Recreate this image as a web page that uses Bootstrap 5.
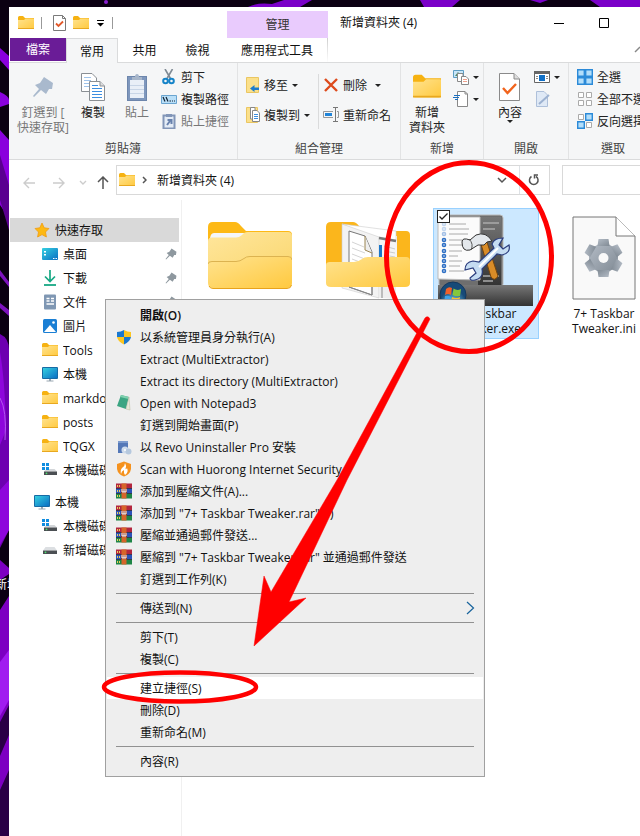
<!DOCTYPE html>
<html lang="zh-Hant">
<head>
<meta charset="utf-8">
<meta name="viewport" content="width=device-width, initial-scale=1">
<title>新增資料夾 (4)</title>
<link href="https://cdn.jsdelivr.net/npm/bootstrap@5.3.0/dist/css/bootstrap.min.css" rel="stylesheet">
<style>
body{font-family:"Open Sans","Noto Sans CJK TC",sans-serif;font-size:12px;line-height:15px;color:#111;background:#0b0012}
button,input{font:inherit;color:inherit}
button{background:none;border:0;padding:0}
a{color:inherit;text-decoration:none}
svg{display:block;flex-shrink:0}
.desk{min-height:100vh;padding:7px 0 0 9px}
.wallpaper{inset:0;width:100%;height:100%}
.desk-label{left:-5px;top:577px;color:#fff;white-space:nowrap}
.win{min-height:calc(100vh - 7px);background:#fff}
.head{height:55px}
.qat{height:31px;gap:7px;padding-left:9px}
.vline{width:1px;height:12px;background:#999}
.tabs{height:24px}
.tab-b{height:24px;width:53px}
.tab-file{width:57px;height:23px;background:#6a1c97;color:#fff;border-left:1px solid #fff}
.tab-on{width:52px;height:25px;background:#f5f6f7;border:1px solid #dadbdc;border-bottom:0;z-index:1}
.left-head{width:218px}
.ctx-head{width:101px;padding-top:4px}
.ctx-top{height:27px;background:#e9cbfd;color:#333}
.ctx-sub{height:24px;border-right:1px solid;border-image:linear-gradient(#ccc,#fff) 1}
.cap{width:45px;height:31px}
.ribbon{height:98px;background:#f5f6f7;border-top:1px solid #dadbdc;border-bottom:1px solid #dadbdc;color:#222}
.grp{padding:3px 0;border-right:1px solid #e2e3e4}
.grp-body{height:75px}
.grp-name{height:15px;color:#444}
.g1{width:229px}.g2{width:163px}.g3{width:83px}.g4{width:85px}.g5{width:100px}
.big{padding-top:3px}
.big .pic{height:36px}
.off{color:#777}
.small-b{height:22px;gap:4px}
.mid-b{height:30px;gap:4px}
.caret{width:0;height:0;border:3px solid transparent;border-top-color:#222;border-bottom:0}
.inner-line{width:1px;height:55px;background:#dadbdc}
.navrow{height:40px;padding-top:5px}
.arrows{padding:0 7px 0 14px}
.gap-fwd{margin:0 14px 0 18px}
.gap-up{margin-left:10px}
.bar{height:30px;border:1px solid #d9d9d9}
.place{margin-left:10px}
.search{width:78px;margin-left:12px;border-right:0;background:#fff;outline:0}
.crumb-ic{margin:0 7px 0 2px}
.side{width:173px;padding-top:18px;border-right:1px solid #f0f0f0}
.side a{height:24px;gap:5px;padding:0 2px 0 32px;margin-right:2px;margin-left:1px}
.side a.root{padding-left:24px}
.side a.sel{background:#d9d9d9}
.side span{overflow:hidden}
.files{padding:8px 0 0 15px;gap:12px}
.tile{width:106px;height:131px;border:1px solid transparent;padding-top:5px;line-height:15px}
.tile.sel{background:#cce8ff;border-color:#99d1ff}
.tile .pic{height:92px}
.page-pic{padding-top:2px}
.tick{left:3px;top:1px;width:13px;height:13px;appearance:none;border:1px solid #222;background:#fff url("data:image/svg+xml,%3Csvg xmlns='http://www.w3.org/2000/svg' viewBox='0 0 11 11'%3E%3Cpath d='M1.500 5.500 4 8 9.500 2.500' fill='none' stroke='%23222' stroke-width='1.300'/%3E%3C/svg%3E")}
.menu{left:105px;top:299px;width:380px;padding:4px 1px 4px;background:#eee;border:1px solid #a0a0a0;color:#111}
.menu button{height:22px;width:100%;padding-left:9px;gap:8px}
.menu button.hot{background:#fff}
.menu hr{margin:3px 9px;border:0;height:1px;background:#919191;opacity:1}
.menu .ic{width:16px}
.notes{left:0;top:0;pointer-events:none}
</style>
</head>
<body>
<svg width="0" height="0" class="position-absolute" aria-hidden="true">
<defs>
<linearGradient id="gy" x1="0" y1="0" x2="1" y2="1"><stop offset="0" stop-color="#ffe38f"/><stop offset="1" stop-color="#ffc93f"/></linearGradient>
<linearGradient id="gl" x1="0" y1="0" x2="1" y2="1"><stop offset="0" stop-color="#ffe69c"/><stop offset="1" stop-color="#fad770"/></linearGradient>
<linearGradient id="gt" x1="0" y1="0" x2="1" y2="1"><stop offset="0" stop-color="#35d0e0"/><stop offset="1" stop-color="#0b6fc4"/></linearGradient>
<linearGradient id="gb" x1="0" y1="0" x2="0" y2="1"><stop offset="0" stop-color="#777"/><stop offset="1" stop-color="#333"/></linearGradient>
<linearGradient id="gg" x1="0" y1="0" x2="1" y2="1"><stop offset="0" stop-color="#b4bcc6"/><stop offset="1" stop-color="#808a94"/></linearGradient>
<radialGradient id="orb" cx=".5" cy=".8"><stop offset="0" stop-color="#6fd0f4"/><stop offset="1" stop-color="#174a78"/></radialGradient>
<symbol id="folder" viewBox="0 0 16 14"><path d="M0 1.500Q0 0 1.500 0H5L7 2H16V6H0z" fill="#f6b212"/><path d="M0 4H6L7.500 2.500H15.500Q16 2.500 16 3V12Q16 13 15 13H1Q0 13 0 12z" fill="url(#gy)"/><path d="M0 12.500H16" stroke="#e8a820"/></symbol>
<symbol id="bigfolder" viewBox="0 0 84 67"><path d="M0 5Q0 0 5 0H27Q30 0 33 4L38 9H80Q84 9 84 13V40H0z" fill="#fdb916"/><path d="M2 18Q2 11 6 11H38L30 17H2z" fill="#f4f6fa"/><path d="M0 19Q0 15.500 4 15.500H28Q31 15.500 34 13L36 11Q38 10 40 10H80Q84 10 84 14V50H0z" fill="url(#gl)"/><path d="M0 43Q0 40 4 40H28Q32 40 36 37Q38 35 42 35H80Q84 35 84 39V61Q84 66 79 66H5Q0 66 0 61z" fill="url(#gy)"/><path d="M0 42Q0 39.500 4 39.500H28Q32 39.500 36 36.500Q38 34.500 42 34.500H80Q84 34.500 84 38" fill="none" stroke="#dcb350"/><path d="M1 64Q2 66.500 5 66.500H79Q83 66.500 83.500 63" fill="none" stroke="#e8a31c"/></symbol>
<symbol id="docfolder" viewBox="0 0 86 78"><path d="M1 5Q1 0 6 0H28Q31 0 34 4L39 9H81Q85 9 85 13V60H1z" fill="#fbb61c"/><path d="M54 14H72V60H54z" fill="#f4f4f4"/><path d="M17 2 54 12V76L17 66z" fill="#f3f3f3" stroke="#ccc" stroke-width=".6"/><path d="M17 2 71 9V18L54 15z" fill="#fff" stroke="#ccc" stroke-width=".6"/><path d="M24 9 40 14 47 30V73L24 65z" fill="#fff" stroke="#777"/><path d="M40 14V28L47 31" fill="#eee" stroke="#9a8450"/><path d="M27 20 39 25M27 26 40 31M27 32 45 39M27 37 45 44" stroke="#d4d4d4"/><path d="M54 16 71 19" stroke="#777" stroke-width="2.500"/><path d="M54 23H57V37H54z" fill="#1976c9"/><path d="M59 24 70 27M59 29 70 31M59 33 70 35" stroke="#ccc"/><path d="M54 64H71V77L54 76z" fill="#eee"/><path d="M1 43Q1 40 5 40H29Q33 40 37 37Q39 35 43 35H81Q85 35 85 39V61Q85 65 80 65H6Q1 65 1 61z" fill="url(#gy)"/><path d="M24 65 47 73V65M57 65V76" stroke="#888" fill="none"/></symbol>
<symbol id="pin" viewBox="0 0 22 22"><path d="M12 1 21 7 20 13 17 13 14 18 9 14 2 21 1 20 7 13 3 9 8 7z"/></symbol>
<symbol id="copy" viewBox="0 0 24 28"><path d="M.5.500H11L15.500 5V18.500H.5z" fill="#fff" stroke="#8a8f94"/><path d="M3 4.500H10M3 7.500H10M3 10.500H10M3 13.500H8" stroke="#9fc3ea"/><path d="M8.500 8.500H19L23.500 13V27.500H8.500z" fill="#fff" stroke="#8a8f94"/><path d="M19 8.500V13H23.500" fill="#ddd" stroke="#8a8f94"/><path d="M11 12.500H17M11 15.500H21M11 18.500H21M11 21.500H21M11 24.500H21" stroke="#3c8ee0"/></symbol>
<symbol id="paste" viewBox="0 0 20 28"><rect x=".5" y="3.500" width="19" height="24" fill="#7e97bd" stroke="#6d86ac"/><path d="M3 7H17V25H3z" fill="#e9eff7"/><path d="M3 12.500H17M3 16.500H17M3 20.500H17" stroke="#c8d5e6"/><path d="M5 4H8Q8 1 10 1T12 4H15V7H5z" fill="#a7b6ca"/></symbol>
<symbol id="cut" viewBox="0 0 16 16"><path d="M4 0 9.500 9.500M11.500 0 6 9.500" stroke="#7f8a94" stroke-width="1.600"/><circle cx="4.500" cy="12" r="2.300" fill="none" stroke="#1583c8" stroke-width="2"/><circle cx="10.500" cy="12" r="2.300" fill="none" stroke="#1583c8" stroke-width="2"/></symbol>
<symbol id="cpath" viewBox="0 0 16 16"><path d="M.5 4.500H15.500V12.500H.5z" fill="#b9dff8" stroke="#6ba5d0"/><path d="M2 6 4 10.500M5 6 7 10.500M8.500 10H10M11 10H12M13 10H14" stroke="#123" stroke-width="1.200"/></symbol>
<symbol id="plink" viewBox="0 0 16 16"><path d="M2.500 2.500H13.500V15.500H2.500z" fill="#e4ecf6" stroke="#8296b8" stroke-width="2"/><path d="M5 1H11V4H5z" fill="#8296b8"/><path d="M6 12 9 8M6.500 7H10.500V11" fill="none" stroke="#6882ad" stroke-width="2"/></symbol>
<symbol id="moveto" viewBox="0 0 14 16"><path d="M.5.500H12.500V15.500H.5z" fill="#fbe08b" stroke="#eac662"/><path d="M4 11.500 8.500 8V10.500H13V13H8.500V15z" fill="#1d7ccc"/></symbol>
<symbol id="copyto" viewBox="0 0 14 16"><path d="M.5.500H11.500V15.500H.5z" fill="#fbe08b" stroke="#eac662"/><path d="M4.500.5H9V12H4.500z" fill="#fff" stroke="#888"/><path d="M6.500 3.500H11L13.500 6V14.500H6.500z" fill="#fff" stroke="#888"/><path d="M8 7.500H12M8 9.500H12M8 11.500H12" stroke="#3c8ee0"/></symbol>
<symbol id="del" viewBox="0 0 16 14"><path d="M2 1 14 13M14 1 2 13" stroke="#dd4a1c" stroke-width="2.400"/></symbol>
<symbol id="ren" viewBox="0 0 16 16"><path d="M10 4.500H.5V10.500H10M14 4.500H15.500V10.500H14" fill="none" stroke="#999"/><path d="M2 6H9V9H2z" fill="#2084d8"/><path d="M12.500 1V14M10 .5H15M10 14.500H15" stroke="#777"/></symbol>
<symbol id="props" viewBox="0 0 21 28"><path d="M.5.500H15L20.500 6V27.500H.5z" fill="#fff" stroke="#8a8a8a"/><path d="M15 .5V6H20.500" fill="#ddd" stroke="#8a8a8a"/><path d="M4 15 8.500 20 17 11" fill="none" stroke="#f1641d" stroke-width="2.400"/></symbol>
<symbol id="sprops" viewBox="0 0 13 16"><path d="M.5.500H9.500L12.500 3.500V15.500H.5z" fill="#fff" stroke="#7a7a7a"/><path d="M9.500.5V3.500H12.500" fill="none" stroke="#7a7a7a"/><path d="M3 8.500 5.500 11 10 6.500" fill="none" stroke="#e2582a" stroke-width="1.800"/></symbol>
<symbol id="newitem" viewBox="0 0 16 16"><path d="M.5 1.500H10.500V8.500H.5z" fill="#c9e6f8" stroke="#5d9dc4"/><path d="M2 7 5 3 8 7z" fill="#4d8a63"/><path d="M4.500 4.500H10V12.500H4.500z" fill="#fff" stroke="#888"/><path d="M8.500 7.500H13L15.500 10V15.500H8.500z" fill="#fff" stroke="#888"/><path d="M10 10.500H14M10 12.500H14" stroke="#f0a08c"/></symbol>
<symbol id="easy" viewBox="0 0 16 16"><path d="M4.500.500H12L14.500 3V15.500H4.500z" fill="#fff" stroke="#888"/><path d="M12 .5V3H14.500" fill="none" stroke="#888"/><path d="M1 4.500H7M0 6.500H6M2 8.500H5" stroke="#1b6fbf"/></symbol>
<symbol id="openw" viewBox="0 0 16 12"><path d="M.5.500H15.500V11.500H.5z" fill="#fff" stroke="#666"/><path d="M0 0H16V3H0z" fill="#666"/><path d="M5 4H11V10H5z" fill="#0f6fc6"/><path d="M2 5.500H4M2 7.500H4M12 5.500H14M12 7.500H14" stroke="#888"/></symbol>
<symbol id="edit" viewBox="0 0 16 16"><path d="M2.500.500H10L13.500 4V15.500H2.500z" fill="#dfe9f6" stroke="#aec0da"/><path d="M5 13 15 4" stroke="#9db2d1" stroke-width="2"/></symbol>
<symbol id="selall" viewBox="0 0 16 16"><path d="M.7.700H7.300V7.300H.7zM8.700.700H15.300V7.300H8.700zM.7 8.700H7.300V15.300H.7zM8.700 8.700H15.300V15.300H8.700z" fill="#b3defa" stroke="#2b8ad8" stroke-width="1.400"/></symbol>
<symbol id="selno" viewBox="0 0 16 16"><path d="M1.500 1.500H6.500V6.500H1.500zM9.500 1.500H14.500V6.500H9.500zM1.500 9.500H6.500V14.500H1.500zM9.500 9.500H14.500V14.500H9.500z" fill="#fff" stroke="#aaa"/></symbol>
<symbol id="selinv" viewBox="0 0 16 16"><path d="M1.500 1.500H6.500V6.500H1.500zM9.500 9.500H14.500V14.500H9.500z" fill="#fff" stroke="#aaa"/><path d="M8.700.700H15.300V7.300H8.700zM.7 8.700H7.300V15.300H.7z" fill="#b3defa" stroke="#2b8ad8" stroke-width="1.400"/></symbol>
<symbol id="star" viewBox="0 0 16 16"><path d="M8 1 10.200 5.800 15 6.500 11.500 10 12.400 15 8 12.600 3.600 15 4.500 10 1 6.500 5.800 5.800z" fill="#fdb913" stroke="#f09a10" stroke-width=".8"/></symbol>
<symbol id="desktop" viewBox="0 0 16 12"><rect width="16" height="12" rx="1" fill="url(#gt)"/><path d="M2 3H4V4.500H2zM2 6H4V7.500H2zM11 10H12.500V11H11zM13.500 10H15V11H13.500z" fill="#fff"/></symbol>
<symbol id="down" viewBox="0 0 16 16"><path d="M8 0V11M3 6.500 8 11.500 13 6.500" fill="none" stroke="#17a884" stroke-width="1.700"/><path d="M2 15H14" stroke="#17a884" stroke-width="1.800"/></symbol>
<symbol id="doc" viewBox="0 0 16 16"><rect x="2" y=".5" width="12" height="15" rx="1" fill="#7f97b3"/><path d="M4.500 4.500H7.500M9 4.500H12M4.500 7H7.500M9 7H12M4.500 10H12" stroke="#fff" stroke-width="1.400"/></symbol>
<symbol id="photo" viewBox="0 0 16 16"><rect x="1" y="1" width="14" height="14" rx="1.500" fill="#1b7fd4"/><path d="M2 14 8 7 14 14z" fill="#fff"/><circle cx="11.500" cy="4.500" r="1.300" fill="#fff"/></symbol>
<symbol id="pc" viewBox="0 0 16 16"><rect y="1" width="16" height="12" rx="1" fill="#176ba5"/><path d="M1 2H15V12H1z" fill="url(#gt)"/><path d="M7 13H9V14.500H11.500V15.500H4.500V14.500H7z" fill="#9aa7b2"/></symbol>
<symbol id="disk" viewBox="0 0 16 16"><path d="M3.500 5H12.500L15 8.500H1z" fill="#dcdfe2"/><path d="M1 8.500H15V12H1z" fill="#4b4f53"/><circle cx="3.500" cy="10.300" r=".9" fill="#4be06c"/></symbol>
<symbol id="wdisk" viewBox="0 0 16 16"><path d="M4.500 7H12.500L15 9.500H2z" fill="#d3d6d9"/><path d="M2 9.500H15V13H2z" fill="#4b4f53"/><circle cx="4.500" cy="11.300" r=".9" fill="#4be06c"/><path d="M0 1H3V4H0zM4 1H7V4H4zM0 5H3V8H0zM4 5H7V8H4z" fill="#108de0"/></symbol>
<symbol id="shield" viewBox="0 0 16 16"><path d="M8 1V8H1V3Q5 3 8 1zM8 8H15Q14 13 8 15.500z" fill="#1a78d0"/><path d="M8 1Q11 3 15 3V8H8zM1 8H8V15.500Q2 13 1 8z" fill="#fcc521"/></symbol>
<symbol id="note" viewBox="0 0 16 16"><path d="M5 0 13 2 10 14 1 11z" fill="#3ba582"/><path d="M5 0 13 2 12.500 4 4 2z" fill="#7fd0ae"/><path d="M13 2 14 15 10 14z" fill="#e5e8d7" stroke="#b8b8a0" stroke-width=".5"/></symbol>
<symbol id="revo" viewBox="0 0 16 16"><path d="M2 2H12V14H2z" fill="#5478b8"/><path d="M2 2H12V4H2z" fill="#7c9bce"/><circle cx="9" cy="11" r="3.500" fill="#cfdcec"/><circle cx="12.500" cy="12.500" r="3" fill="#b5c8de"/><circle cx="9" cy="11" r="1" fill="#fff"/></symbol>
<symbol id="fire" viewBox="0 0 16 16"><path d="M8 .5 15 3V8Q14 13.500 8 15.500Q2 13.500 1 8V3z" fill="#f5921e"/><path d="M9 2Q9 5 6 7Q4 9 5 13Q5.500 10 8 9Q7.500 12 9 14Q13 11 11 7Q10.500 8.500 9.500 8Q11 5 9 2z" fill="#fff"/></symbol>
<symbol id="rar" viewBox="0 0 16 16"><path d="M0 .500H16V5.500H0z" fill="#b3263e"/><path d="M0 5.500H16V10.500H0z" fill="#2b51b8"/><path d="M0 10.500H16V15.500H0z" fill="#1f8546"/><path d="M0 5.500H16M0 10.500H16" stroke="#1d1d2c" stroke-width=".7"/><path d="M5.500.500H10.500V15.500H5.500z" fill="#d6652a"/><path d="M5 6H11V10H5z" fill="#953a25"/><path d="M6 6V9H10V6M8 6V9" stroke="#fff" fill="none"/><path d="M1.500 2V4M1.500 7V9M1.500 12V14M3.500 2V4M3.500 7V9M3.500 12V14" stroke="#e7cf5b"/></symbol>
<symbol id="ini" viewBox="0 0 64 84"><path d="M1 1H44L63 20V83H1z" fill="#f9f9f9" stroke="#777"/><path d="M44 1V20H63" fill="#fff" stroke="#777"/><g transform="translate(31.500 42)"><g fill="url(#gg)"><circle r="14.500"/><path id="tooth" d="M-5-19H5L6-12H-6z"/><use href="#tooth" transform="rotate(60)"/><use href="#tooth" transform="rotate(120)"/><use href="#tooth" transform="rotate(180)"/><use href="#tooth" transform="rotate(240)"/><use href="#tooth" transform="rotate(300)"/></g><circle r="5" fill="#f9f9f9"/></g></symbol>
<symbol id="exe" viewBox="0 0 100 92"><rect x="5" y="1" width="64" height="72" rx="3" fill="#6e6e6e" stroke="#bbb"/><path d="M44 3H67V72H44z" fill="url(#gb)"/><path d="M4 3H46V66L4 65z" fill="#fbfbfb" stroke="#bbb"/><path d="M15 10H32M15 15H35M15 20H34M15 26H28M15 31H30M15 37H28M15 42H24M15 47H28M15 52H26M15 57H30" stroke="#aaa"/><g fill="none" stroke="#2e6fc4" stroke-width="1.600"><circle cx="10" cy="10" r="1.500" stroke="#c3d6ee"/><circle cx="10" cy="15" r="1.500" stroke="#c3d6ee"/><circle cx="10" cy="20" r="1.500" stroke="#a3c0e6"/><circle cx="10" cy="26" r="1.500"/><circle cx="10" cy="31" r="1.500"/><circle cx="10" cy="37" r="1.500"/><circle cx="10" cy="42" r="1.500"/><circle cx="10" cy="47" r="1.500"/><circle cx="10" cy="52" r="1.500"/><circle cx="10" cy="57" r="1.500"/></g><path d="M49 9H65M49 15H61M49 62H65M49 67H59" stroke="#aaa" stroke-width="1.500"/><path d="M46 27 52 25 64 62Q61 68 57 63z" fill="#d98c28" stroke="#74450e"/><path d="M28 28Q28 23 36 26L42 21Q52 17 58 27Q52 27 50 31L44 31 36 36Q28 38 28 28z" fill="#e4e8ec" stroke="#333"/><path d="M35 25Q40 30 37 36" fill="none" stroke="#555"/><path d="M58 30Q60 24 69 24L65 31 69 35 75 31Q77 39 68 41L63 40 48 55Q50 64 41 66Q36 67 36 64L42 59 39 54 31 56Q31 48 39 47L45 48 60 34z" fill="#c5dcf2" stroke="#2b3d7d" stroke-width="1.200"/><path d="M45 53 64 34" stroke="#fff" stroke-width="2"/><path d="M4 71H99V92H4z" fill="url(#gb)"/><circle cx="19" cy="81" r="13" fill="url(#orb)" stroke="#15385e"/><path d="M12 75Q15 72 18 74L17 81Q14 79 11 81z" fill="#f1612a"/><path d="M19.500 74.500Q23 77 27 75L26 82Q22 83 18.500 81z" fill="#85c83c"/><path d="M11 82Q14 81 17 83L16 90Q12 88 10 90z" fill="#3fa2e8"/><path d="M18 83Q22 85 26 83L25 90Q21 92 17 90z" fill="#fbc42c"/></symbol>
</defs>
</svg>
<div class="desk position-relative overflow-hidden">
  <svg class="wallpaper position-absolute" viewBox="0 0 640 836" preserveAspectRatio="xMinYMin slice" aria-hidden="true">
    <rect width="640" height="836" fill="#0b0012"/>
    <path d="M248 7Q258 2 272 4L284 0H312L300 7zM420 0H460L452 7H424zM530 0H548L540 3zM590 0H640V7H600z" fill="#7a00c8"/><circle cx="106" cy="2" r="2" fill="#8a1fd0"/>
    <path d="M0 48 9 56V70L0 60zM0 92Q9 96 9 100V104L0 107zM0 130 9 140V218L0 205z" fill="#8a00dd"/>
    <path d="M0 155 9 185V230L0 200z" fill="#5a0090"/><path d="M0 270 9 282V287L0 276zM0 303 9 310V316L0 308z" fill="#7d12bd"/>
    <path d="M0 334Q9 338 9 350V530L0 548z" fill="#6d00b0"/><path d="M0 352Q5 380 6 430L0 445zM0 490 9 480V530L0 545z" fill="#8e06dc"/><path d="M0 398Q7 410 5 440" stroke="#b455f0" fill="none"/>
    <path d="M0 560 9 568V574L0 580zM0 610 9 596V836H0z" fill="#7d00c2"/><path d="M0 662 9 650V700L0 716z" fill="#a11cf0"/><path d="M0 722 9 705V735L0 756zM0 790 9 770V836H0z" fill="#2a0046"/>
  </svg>
  <div class="desk-label position-absolute">新增</div>

  <main class="win position-relative d-flex flex-column overflow-hidden">
    <header class="head d-flex">
      <div class="left-head d-flex flex-column flex-shrink-0">
        <div class="qat d-flex align-items-center">
          <svg width="16" height="14"><use href="#folder"/></svg>
          <i class="vline"></i>
          <button class="ms-1" aria-label="內容"><svg width="13" height="16"><use href="#sprops"/></svg></button>
          <button aria-label="新增資料夾"><svg width="16" height="14"><use href="#folder"/></svg></button>
          <button aria-label="自訂"><svg width="9" height="8"><path d="M1 1.500H8" stroke="#000"/><path d="M1 4H8L4.500 7.500z"/></svg></button>
          <i class="vline"></i>
        </div>
        <nav class="tabs d-flex">
          <button class="tab-file">檔案</button>
          <button class="tab-on position-relative">常用</button>
          <button class="tab-b">共用</button>
          <button class="tab-b">檢視</button>
        </nav>
      </div>
      <div class="ctx-head flex-shrink-0">
        <div class="ctx-top d-flex align-items-center justify-content-center">管理</div>
        <button class="ctx-sub w-100 d-block">應用程式工具</button>
      </div>
      <div class="flex-grow-1 d-flex align-items-start ps-2">
        <div class="cap flex-grow-1 d-flex align-items-center ps-1">新增資料夾 (4)</div>
        <button class="cap d-flex align-items-center justify-content-center" aria-label="最小化"><svg width="10" height="10"><path d="M0 5.500H10" stroke="#000"/></svg></button>
        <button class="cap d-flex align-items-center justify-content-center" aria-label="最大化"><svg width="10" height="10"><path d="M.5.500H9.500V9.500H.5z" fill="none" stroke="#000"/></svg></button>
        <button class="align-self-end mb-1" aria-label="收合功能區"><svg width="14" height="14"><path d="M9 8 14 3" stroke="#888" stroke-width="1.500"/></svg></button>
      </div>
    </header>

    <section class="ribbon d-flex flex-shrink-0">
      <div class="grp g1 flex-shrink-0">
        <div class="grp-body d-flex">
          <button class="big off ps-2 d-flex flex-column align-items-center"><span class="pic d-flex align-items-center"><svg width="22" height="22" fill="#a9b9cd"><use href="#pin"/></svg></span><span class="text-nowrap">釘選到 [<br>快速存取]</span></button>
          <button class="big ms-2 ps-1 d-flex flex-column align-items-center"><span class="pic d-flex align-items-center"><svg width="24" height="28"><use href="#copy"/></svg></span>複製</button>
          <button class="big ms-3 ps-1 d-flex flex-column align-items-center off"><span class="pic d-flex align-items-center"><svg width="20" height="28"><use href="#paste"/></svg></span>貼上</button>
          <div class="ms-2 ps-1 d-flex flex-column">
            <button class="small-b d-flex align-items-center"><svg width="16" height="16"><use href="#cut"/></svg>剪下</button>
            <button class="small-b d-flex align-items-center"><svg width="16" height="16"><use href="#cpath"/></svg>複製路徑</button>
            <button class="small-b d-flex align-items-center off"><svg width="16" height="16"><use href="#plink"/></svg>貼上捷徑</button>
          </div>
        </div>
        <div class="grp-name text-center">剪貼簿</div>
      </div>
      <div class="grp g2 flex-shrink-0">
        <div class="grp-body d-flex pt-1 ps-2">
          <div>
            <button class="mid-b d-flex align-items-center"><svg width="14" height="16"><use href="#moveto"/></svg>移至<i class="caret"></i></button>
            <button class="mid-b d-flex align-items-center"><svg width="14" height="16"><use href="#copyto"/></svg>複製到<i class="caret"></i></button>
          </div>
          <i class="inner-line ms-2 me-1 mt-1"></i>
          <div>
            <button class="mid-b d-flex align-items-center"><svg width="16" height="14"><use href="#del"/></svg>刪除<i class="caret ms-1"></i></button>
            <button class="mid-b d-flex align-items-center text-nowrap"><svg width="16" height="16"><use href="#ren"/></svg>重新命名</button>
          </div>
        </div>
        <div class="grp-name text-center">組合管理</div>
      </div>
      <div class="grp g3 flex-shrink-0">
        <div class="grp-body d-flex ps-2">
          <button class="big d-flex flex-column align-items-center"><span class="pic d-flex align-items-center"><svg width="28" height="26"><use href="#folder"/></svg></span>新增<br>資料夾</button>
          <div class="ms-2">
            <button class="small-b d-flex align-items-center" aria-label="新增項目"><svg width="16" height="16"><use href="#newitem"/></svg><i class="caret"></i></button>
            <button class="small-b d-flex align-items-center" aria-label="輕鬆存取"><svg width="16" height="16"><use href="#easy"/></svg><i class="caret"></i></button>
          </div>
        </div>
        <div class="grp-name text-center">新增</div>
      </div>
      <div class="grp g4 flex-shrink-0">
        <div class="grp-body d-flex justify-content-end pe-2">
          <button class="big d-flex flex-column align-items-center"><span class="pic d-flex align-items-center"><svg width="21" height="28"><use href="#props"/></svg></span>內容<i class="caret"></i></button>
          <div class="ms-2 ps-1">
            <button class="small-b d-flex align-items-center" aria-label="開啟"><svg width="16" height="12"><use href="#openw"/></svg><i class="caret"></i></button>
            <button class="small-b d-flex align-items-center" aria-label="編輯"><svg width="16" height="16"><use href="#edit"/></svg></button>
          </div>
        </div>
        <div class="grp-name text-center">開啟</div>
      </div>
      <div class="grp g5 flex-shrink-0 border-0">
        <div class="grp-body ps-2 text-nowrap">
          <button class="small-b d-flex align-items-center"><svg width="16" height="16"><use href="#selall"/></svg>全選</button>
          <button class="small-b d-flex align-items-center"><svg width="16" height="16"><use href="#selno"/></svg>全部不選</button>
          <button class="small-b d-flex align-items-center"><svg width="16" height="16"><use href="#selinv"/></svg>反向選擇</button>
        </div>
        <div class="grp-name ps-4 ms-2">選取</div>
      </div>
    </section>

    <div class="navrow d-flex flex-shrink-0">
      <div class="arrows d-flex align-items-center">
        <button aria-label="上一頁"><svg width="12" height="12"><path d="M6 1 1 6 6 11M1 6H12" fill="none" stroke="#ccc" stroke-width="1.400"/></svg></button>
        <button class="gap-fwd" aria-label="下一頁"><svg width="12" height="12"><path d="M6 1 11 6 6 11M11 6H0" fill="none" stroke="#ccc" stroke-width="1.400"/></svg></button>
        <button aria-label="最近的位置"><svg width="8" height="6"><path d="M1 1 4 4 7 1" fill="none" stroke="#ccc" stroke-width="1.400"/></svg></button>
        <button class="gap-up" aria-label="上移"><svg width="12" height="13"><path d="M1 6 6 1 11 6M6 1V13" fill="none" stroke="#555" stroke-width="1.500"/></svg></button>
      </div>
      <div class="bar flex-grow-1 d-flex align-items-center">
        <svg class="crumb-ic" width="16" height="14"><use href="#folder"/></svg>
        <svg width="5" height="8"><path d="M1 1 4 4 1 7" fill="none" stroke="#555" stroke-width="1.500"/></svg>
        <a href="#" class="place">新增資料夾 (4)</a>
        <button class="ms-auto me-2 pe-1" aria-label="記錄"><svg width="10" height="7"><path d="M1 1 5 5 9 1" fill="none" stroke="#555" stroke-width="1.500"/></svg></button>
        <button class="h-100 px-2 border-start" aria-label="重新整理"><svg width="13" height="12"><path d="M4 2.500A4.300 4.300 0 1 0 8.500 2.500M2 1H5.500V4.500" fill="none" stroke="#555" stroke-width="1.500" transform="translate(12 0) scale(-1 1)"/></svg></button>
      </div>
      <input class="bar search rounded-0" aria-label="搜尋">
    </div>

    <div class="d-flex flex-grow-1">
      <nav class="side flex-shrink-0 text-nowrap">
        <a href="#" class="root sel d-flex align-items-center"><svg width="16" height="16"><use href="#star"/></svg><span>快速存取</span></a>
        <a href="#" class="d-flex align-items-center"><svg width="16" height="12"><use href="#desktop"/></svg><span>桌面</span><svg class="ms-auto" width="12" height="12" fill="#8e989f"><use href="#pin"/></svg></a>
        <a href="#" class="d-flex align-items-center"><svg width="16" height="16"><use href="#down"/></svg><span>下載</span><svg class="ms-auto" width="12" height="12" fill="#8e989f"><use href="#pin"/></svg></a>
        <a href="#" class="d-flex align-items-center"><svg width="16" height="16"><use href="#doc"/></svg><span>文件</span><svg class="ms-auto" width="12" height="12" fill="#8e989f"><use href="#pin"/></svg></a>
        <a href="#" class="d-flex align-items-center"><svg width="16" height="16"><use href="#photo"/></svg><span>圖片</span></a>
        <a href="#" class="d-flex align-items-center"><svg width="16" height="14"><use href="#folder"/></svg><span>Tools</span></a>
        <a href="#" class="d-flex align-items-center"><svg width="16" height="16"><use href="#pc"/></svg><span>本機</span></a>
        <a href="#" class="d-flex align-items-center"><svg width="16" height="14"><use href="#folder"/></svg><span>markdown</span></a>
        <a href="#" class="d-flex align-items-center"><svg width="16" height="14"><use href="#folder"/></svg><span>posts</span></a>
        <a href="#" class="d-flex align-items-center"><svg width="16" height="14"><use href="#folder"/></svg><span>TQGX</span></a>
        <a href="#" class="d-flex align-items-center mb-2"><svg width="16" height="16"><use href="#wdisk"/></svg><span>本機磁碟</span></a>
        <a href="#" class="root d-flex align-items-center"><svg width="16" height="16"><use href="#pc"/></svg><span>本機</span></a>
        <a href="#" class="d-flex align-items-center"><svg width="16" height="16"><use href="#wdisk"/></svg><span>本機磁碟</span></a>
        <a href="#" class="d-flex align-items-center"><svg width="16" height="16"><use href="#disk"/></svg><span>新增磁碟區</span></a>
      </nav>
      <div class="files d-flex">
        <div class="tile flex-shrink-0"><div class="pic d-flex align-items-start justify-content-center pt-2"><svg width="84" height="67"><use href="#bigfolder"/></svg></div></div>
        <div class="tile flex-shrink-0"><div class="pic d-flex align-items-start justify-content-center pt-2"><svg width="86" height="78"><use href="#docfolder"/></svg></div></div>
        <div class="tile sel flex-shrink-0 position-relative text-center">
          <div class="pic d-flex"><svg width="100" height="92"><use href="#exe"/></svg></div>
          <input type="checkbox" checked class="tick position-absolute" id="t1"><label for="t1">7+ Taskbar Tweaker.exe</label>
        </div>
        <div class="tile flex-shrink-0 text-center"><div class="pic page-pic d-flex align-items-start justify-content-center"><svg width="64" height="84"><use href="#ini"/></svg></div>7+ Taskbar Tweaker.ini</div>
      </div>
    </div>
  </main>

  <div class="menu position-absolute" role="menu">
    <button class="d-flex align-items-center fw-semibold"><span class="ic"></span>開啟(O)</button>
    <button class="d-flex align-items-center"><svg width="16" height="16"><use href="#shield"/></svg>以系統管理員身分執行(A)</button>
    <button class="d-flex align-items-center"><span class="ic"></span>Extract (MultiExtractor)</button>
    <button class="d-flex align-items-center"><span class="ic"></span>Extract its directory (MultiExtractor)</button>
    <button class="d-flex align-items-center"><svg width="16" height="16"><use href="#note"/></svg>Open with Notepad3</button>
    <button class="d-flex align-items-center"><span class="ic"></span>釘選到開始畫面(P)</button>
    <button class="d-flex align-items-center"><svg width="16" height="16"><use href="#revo"/></svg>以 Revo Uninstaller Pro 安裝</button>
    <button class="d-flex align-items-center"><svg width="16" height="16"><use href="#fire"/></svg>Scan with Huorong Internet Security</button>
    <button class="d-flex align-items-center"><svg width="16" height="16"><use href="#rar"/></svg>添加到壓縮文件(A)...</button>
    <button class="d-flex align-items-center"><svg width="16" height="16"><use href="#rar"/></svg>添加到 "7+ Taskbar Tweaker.rar"(T)</button>
    <button class="d-flex align-items-center"><svg width="16" height="16"><use href="#rar"/></svg>壓縮並通過郵件發送...</button>
    <button class="d-flex align-items-center"><svg width="16" height="16"><use href="#rar"/></svg>壓縮到 "7+ Taskbar Tweaker.rar" 並通過郵件發送</button>
    <button class="d-flex align-items-center"><span class="ic"></span>釘選到工作列(K)</button>
    <hr>
    <button class="d-flex align-items-center"><span class="ic"></span>傳送到(N)<svg class="ms-auto me-2" width="9" height="14"><path d="M1 1 7.500 7 1 13" fill="none" stroke="#17639c" stroke-width="1.200"/></svg></button>
    <hr>
    <button class="d-flex align-items-center"><span class="ic"></span>剪下(T)</button>
    <button class="d-flex align-items-center"><span class="ic"></span>複製(C)</button>
    <hr>
    <button class="hot d-flex align-items-center"><span class="ic"></span>建立捷徑(S)</button>
    <button class="d-flex align-items-center"><span class="ic"></span>刪除(D)</button>
    <button class="d-flex align-items-center"><span class="ic"></span>重新命名(M)</button>
    <hr>
    <button class="d-flex align-items-center"><span class="ic"></span>內容(R)</button>
  </div>

  <svg class="notes position-absolute" width="640" height="836" aria-hidden="true">
    <g fill="none" stroke="#f00" stroke-width="5"><ellipse cx="469" cy="257" rx="82.500" ry="94.500"/><ellipse cx="180" cy="687" rx="76" ry="14.500" stroke-width="4.500"/></g>
    <path d="M254 646 264 576 271 592 337 480 425 318Q428 315 430 319L347 480 289 602 306 598z" fill="#f00" stroke="#f00" stroke-width=".5"/>
  </svg>
</div>
<script src="https://cdn.jsdelivr.net/npm/bootstrap@5.3.0/dist/js/bootstrap.bundle.min.js"></script>
</body>
</html>
